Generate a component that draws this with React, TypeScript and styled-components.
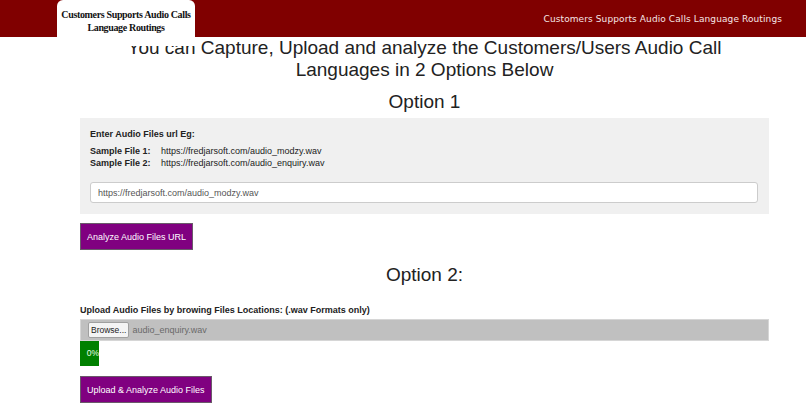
import React from 'react';
import styled, { createGlobalStyle } from 'styled-components';

const GlobalStyle = createGlobalStyle`
  html, body {
    margin: 0;
    padding: 0;
    background: #ffffff;
  }
  body {
    font-family: "Liberation Sans", Arial, sans-serif;
    color: #333333;
  }
`;

const TopBar = styled.header`
  position: fixed;
  top: 0;
  left: 0;
  right: 0;
  height: 37px;
  background: #800000;
  display: flex;
  align-items: center;
  justify-content: flex-end;
  padding-right: 24px;
  z-index: 10;
`;

const BrandTab = styled.div`
  position: absolute;
  left: 57px;
  top: 0;
  width: 138px;
  height: 46px;
  background: #ffffff;
  border-radius: 6px 6px 0 0;
  padding-top: 8px;
  box-sizing: border-box;
  text-align: center;
  font-family: "Liberation Serif", "Times New Roman", serif;
  font-weight: bold;
  font-size: 10px;
  line-height: 13px;
  letter-spacing: -0.35px;
  color: #111111;
`;

const BrandText = styled.span`
  font-family: "DejaVu Sans", sans-serif;
  font-size: 9px;
  color: #f6e6e6;
  letter-spacing: 0.1px;
`;

const Main = styled.main`
  padding-top: 37px;
  margin-left: 80px;
  width: 689px;
`;

const Title = styled.h1`
  margin: 0 auto;
  max-width: 620px;
  text-align: center;
  font-weight: normal;
  font-size: 19px;
  line-height: 22px;
  color: #222222;
`;

const OptionHeading = styled.h2<{ $top: number }>`
  margin: ${props => props.$top}px 0 0;
  text-align: center;
  font-weight: normal;
  font-size: 19px;
  line-height: 24px;
  color: #222222;
`;

const Panel = styled.section`
  margin-top: 4px;
  background: #f0f0f0;
  padding: 10px 11px 11px 10px;
`;

const PanelLabel = styled.div`
  font-size: 9px;
  font-weight: bold;
  line-height: 12px;
  color: #222222;
  margin-bottom: 5px;
`;

const SampleRow = styled.div`
  display: flex;
  font-size: 9px;
  line-height: 12px;
  color: #222222;
`;

const SampleKey = styled.span`
  font-weight: bold;
  width: 71px;
`;

const UrlInput = styled.input`
  display: block;
  margin-top: 13px;
  width: 100%;
  height: 21px;
  box-sizing: border-box;
  border: 1px solid #cccccc;
  border-radius: 3px;
  background: #ffffff;
  padding: 0 7px;
  font-family: "Liberation Sans", Arial, sans-serif;
  font-size: 9px;
  color: #555555;
  outline: none;
`;

const ActionButton = styled.button<{ $top: number }>`
  display: block;
  margin-top: ${props => props.$top}px;
  height: 27px;
  padding: 0 6px;
  background: #800080;
  border: 1px solid #6a5a6a;
  color: #ffffff;
  font-family: "Liberation Sans", Arial, sans-serif;
  font-size: 9px;
  cursor: pointer;
`;

const UploadLabel = styled.div`
  margin-top: 17px;
  font-size: 9px;
  font-weight: bold;
  line-height: 12px;
  color: #222222;
`;

const FileBar = styled.div`
  margin-top: 3px;
  height: 22px;
  box-sizing: border-box;
  background: #c0c0c0;
  border: 1px solid #d6d6d6;
  display: flex;
  align-items: center;
  padding-left: 7px;
  gap: 3px;
`;

const BrowseButton = styled.span`
  height: 14px;
  padding: 0 2px;
  background: #f4f4f4;
  border: 1px solid #a0a0a0;
  border-radius: 2px;
  font-size: 8.5px;
  line-height: 14px;
  color: #222222;
`;

const FileName = styled.span`
  font-size: 9px;
  color: #6a6a6a;
`;

const Progress = styled.div`
  width: 19px;
  height: 25px;
  background: #008000;
  color: #e8ffe8;
  font-size: 8.5px;
  line-height: 25px;
  text-align: right;
  overflow: hidden;
  white-space: nowrap;
`;

export default function App() {
  return (
    <>
      <GlobalStyle />
      <TopBar>
        <BrandTab>
          Customers Supports Audio Calls
          <br />
          Language Routings
        </BrandTab>
        <BrandText>Customers Supports Audio Calls Language Routings</BrandText>
      </TopBar>
      <Main>
        <Title>
          You can Capture, Upload and analyze the Customers/Users Audio Call Languages in 2 Options Below
        </Title>
        <OptionHeading $top={9}>Option 1</OptionHeading>
        <Panel>
          <PanelLabel>Enter Audio Files url Eg:</PanelLabel>
          <SampleRow>
            <SampleKey>Sample File 1:</SampleKey>
            <span>https://fredjarsoft.com/audio_modzy.wav</span>
          </SampleRow>
          <SampleRow>
            <SampleKey>Sample File 2:</SampleKey>
            <span>https://fredjarsoft.com/audio_enquiry.wav</span>
          </SampleRow>
          <UrlInput defaultValue="https://fredjarsoft.com/audio_modzy.wav" />
        </Panel>
        <ActionButton $top={9}>Analyze Audio Files URL</ActionButton>
        <OptionHeading $top={13}>Option 2:</OptionHeading>
        <UploadLabel>Upload Audio Files by browing Files Locations: (.wav Formats only)</UploadLabel>
        <FileBar>
          <BrowseButton>Browse...</BrowseButton>
          <FileName>audio_enquiry.wav</FileName>
        </FileBar>
        <Progress>0%</Progress>
        <ActionButton $top={10}>Upload &amp; Analyze Audio Files</ActionButton>
      </Main>
    </>
  );
}
